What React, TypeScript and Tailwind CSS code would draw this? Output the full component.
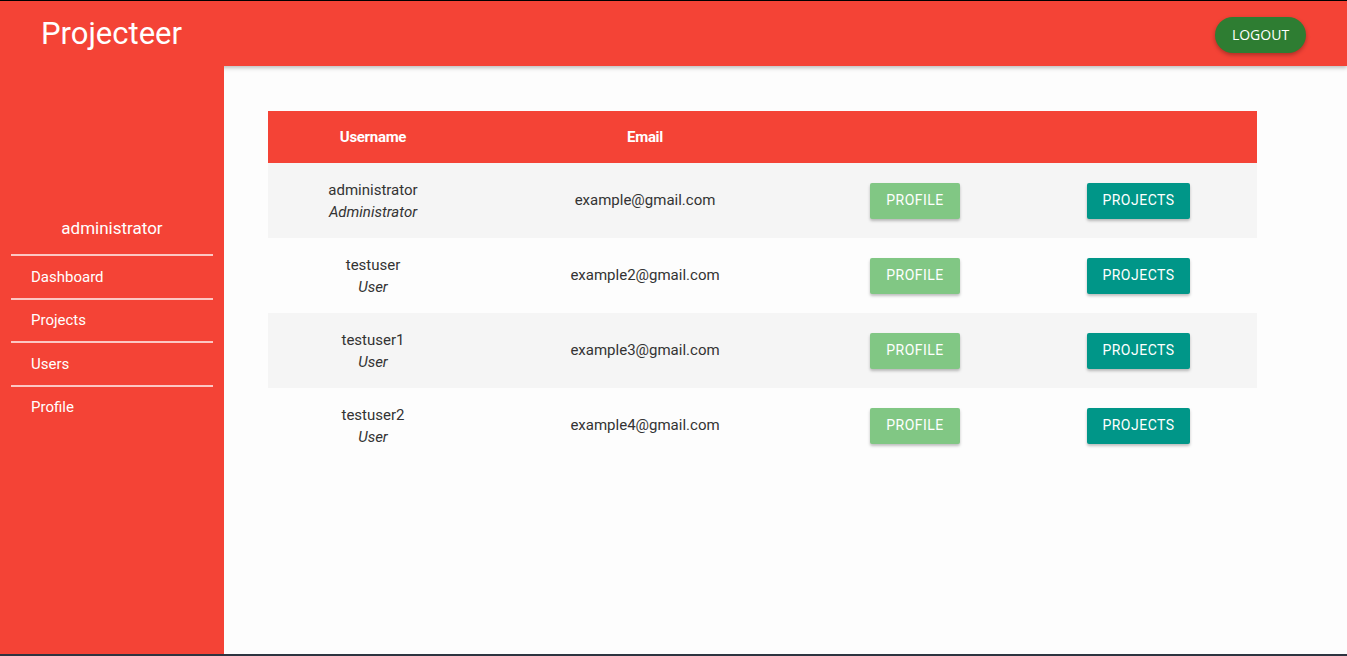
import React from "react";

const users = [
  { name: "administrator", role: "Administrator", email: "example@gmail.com" },
  { name: "testuser", role: "User", email: "example2@gmail.com" },
  { name: "testuser1", role: "User", email: "example3@gmail.com" },
  { name: "testuser2", role: "User", email: "example4@gmail.com" },
];

const navItems = ["Dashboard", "Projects", "Users", "Profile"];

export default function App() {
  return (
    <div className="h-[656px] w-[1347px] overflow-hidden flex flex-col border-t border-black border-b-2 border-b-[#2d3440] bg-[#fdfdfd] font-['Roboto',sans-serif]">
      <header className="relative z-10 h-[65px] shrink-0 bg-[#f44336] flex items-center justify-between pl-[41px] pr-[41px] shadow-[0_2px_4px_rgba(0,0,0,0.25)]">
        <span className="text-white text-[31px] leading-none">Projecteer</span>
        <button className="h-9 w-[91px] mt-[2px] rounded-full bg-[#2e7d32] text-white text-[14px] font-['Open_Sans',sans-serif] shadow-[0_2px_4px_rgba(0,0,0,0.3)]">
          LOGOUT
        </button>
      </header>
      <div className="flex flex-1 min-h-0">
        <aside className="relative z-20 w-[224px] shrink-0 bg-[#f44336] text-white">
          <div className="pt-[150px] pb-[14px] text-center text-[17px] leading-6">administrator</div>
          <ul className="mx-[11px]">
            {navItems.map((item) => (
              <li key={item} className="h-[43.5px] border-t-2 border-white/70 flex items-center pl-5 text-[15px]">
                {item}
              </li>
            ))}
          </ul>
        </aside>
        <main className="flex-1 pt-[45px] pl-[44px]">
          <table className="w-[989px] table-fixed border-collapse text-[15px] text-[#333]">
            <colgroup>
              <col className="w-[210px]" />
              <col className="w-[334px]" />
              <col className="w-[206px]" />
              <col className="w-[239px]" />
            </colgroup>
            <thead>
              <tr className="h-[52px] bg-[#f44336] text-white">
                <th className="font-bold text-[15px] tracking-[-0.3px]">Username</th>
                <th className="font-bold text-[15px] tracking-[-0.3px]">Email</th>
                <th></th>
                <th></th>
              </tr>
            </thead>
            <tbody>
              {users.map((u, i) => (
                <tr key={u.email} className={i % 2 === 0 ? "h-[75px] bg-[#f5f5f5]" : "h-[75px]"}>
                  <td className="text-center leading-[22px]">
                    <div>{u.name}</div>
                    <div className="italic">{u.role}</div>
                  </td>
                  <td className="text-center">{u.email}</td>
                  <td className="text-center">
                    <button className="h-9 w-[90px] rounded-[2px] bg-[#81c784] text-white text-[14px] font-normal tracking-[0.5px] shadow-[0_2px_3px_rgba(0,0,0,0.25)]">
                      PROFILE
                    </button>
                  </td>
                  <td className="text-center">
                    <button className="h-9 w-[103px] ml-[2px] rounded-[2px] bg-[#009688] text-white text-[14px] font-normal tracking-[0.5px] shadow-[0_2px_3px_rgba(0,0,0,0.25)]">
                      PROJECTS
                    </button>
                  </td>
                </tr>
              ))}
            </tbody>
          </table>
        </main>
      </div>
    </div>
  );
}
